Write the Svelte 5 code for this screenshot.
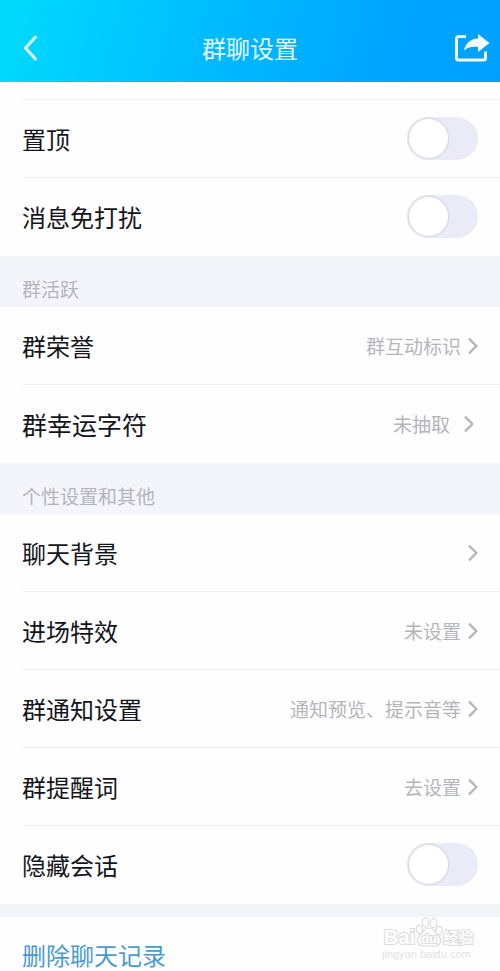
<script>
    let pinned = $state(false);
    let muted = $state(false);
    let hidden = $state(false);

    const activity = [
        { label: "群荣誉", value: "群互动标识" },
        { label: "群幸运字符", value: "未抽取", lucky: true }
    ];

    const personal = [
        { label: "聊天背景", value: "" },
        { label: "进场特效", value: "未设置" },
        { label: "群通知设置", value: "通知预览、提示音等" },
        { label: "群提醒词", value: "去设置" }
    ];
</script>

{#snippet linkRow(item)}
    <li class="row">
        <button class="link" class:lucky={item.lucky}>
            <span class="label">{item.label}</span>
            <span class="value">{item.value}</span>
            <svg class="chevron" width="10" height="20" viewBox="0 0 10 20" aria-hidden="true">
                <path d="M1 2.6 8.400 10 1 17.4" fill="none" stroke="#b4b6be" stroke-width="2.4" />
            </svg>
        </button>
    </li>
{/snippet}

<div class="page">
    <header>
        <button class="icon back" aria-label="返回">
            <svg width="16" height="28" viewBox="0 0 16 28">
                <path d="M13.500 3 3.500 14l10 11" fill="none" stroke="#e6fcff" stroke-width="3" stroke-linecap="round" stroke-linejoin="round" />
            </svg>
        </button>
        <h1>群聊设置</h1>
        <button class="icon" aria-label="分享">
            <svg width="36" height="30" viewBox="0 0 36 30">
                <path d="M12 3.500H4.500a2 2 0 0 0-2 2V25a2 2 0 0 0 2 2h25a2 2 0 0 0 2-2v-6.500" fill="none" stroke="#f4fdff" stroke-width="3" />
                <path d="M24 1 35.500 10 24 19v-5c-6-.6-9.500 0-14 3.600C11.500 10.500 16 6 24 5.500Z" fill="#f4fdff" />
            </svg>
        </button>
    </header>

    <main>
        <div class="strip"></div>
        <ul>
            <li class="row">
                <label>
                    <span class="label">置顶</span>
                    <input type="checkbox" bind:checked={pinned} />
                </label>
            </li>
            <li class="row">
                <label>
                    <span class="label">消息免打扰</span>
                    <input type="checkbox" bind:checked={muted} />
                </label>
            </li>
        </ul>

        <h2>群活跃</h2>
        <ul>
            {#each activity as item}
                {@render linkRow(item)}
            {/each}
        </ul>

        <h2>个性设置和其他</h2>
        <ul>
            {#each personal as item}
                {@render linkRow(item)}
            {/each}
            <li class="row">
                <label>
                    <span class="label">隐藏会话</span>
                    <input type="checkbox" bind:checked={hidden} />
                </label>
            </li>
        </ul>

        <div class="gap"></div>
        <button class="link delete">删除聊天记录</button>
    </main>

    <div class="watermark">
        <div class="brand">
            <span class="latin">Bai</span>
            <span class="paw">
                <svg width="28" height="30" viewBox="0 0 28 30" aria-hidden="true">
                    <g fill="#fff" stroke="#dcdcdc" stroke-width="1.2">
                        <ellipse cx="4.500" cy="12.500" rx="3.200" ry="4.200" transform="rotate(-15 4.500 12.500)" />
                        <ellipse cx="10.500" cy="5.500" rx="3.200" ry="4.600" />
                        <ellipse cx="18.500" cy="6" rx="3.200" ry="4.600" transform="rotate(12 18.500 6)" />
                        <ellipse cx="24" cy="13.500" rx="3.200" ry="4.200" transform="rotate(15 24 13.500)" />
                        <path d="M14 11c3.500 0 5 3 7.500 5.500s5 5 4 8.500c-1 3.600-4.500 4-11.500 4S3.500 28.600 2.500 25c-1-3.500 1.500-6 4-8.500S10.500 11 14 11Z" />
                    </g>
                </svg>
                <span class="du">du</span>
            </span>
            <span class="cjk">经验</span>
        </div>
        <div class="site">jingyan.baidu.com</div>
    </div>
</div>

<style>
    :global(body) {
        margin: 0;
        background: #fefefe;
    }

    .page {
        position: relative;
        height: 100vh;
        overflow: hidden;
        background: #fefefe;
        font-family: "Noto Sans CJK SC", "Liberation Sans", sans-serif;
        color: #14151c;
    }

    button {
        border: none;
        background: none;
        padding: 0;
        font: inherit;
        color: inherit;
        cursor: pointer;
    }

    header {
        display: flex;
        align-items: center;
        justify-content: space-between;
        height: 82px;
        box-sizing: border-box;
        padding: 14px 10px 0;
        background: linear-gradient(105deg, #00dcfc 0%, #00c6ff 28%, #00b6ff 50%, #00a6ff 75%, #00a0ff 100%);
    }

    .icon {
        display: flex;
        width: 36px;
    }

    .back {
        padding-left: 12px;
    }

    h1 {
        margin: 0;
        font-size: 24px;
        line-height: 36px;
        font-weight: 400;
        color: #e6faff;
    }

    .strip {
        height: 17px;
        margin-left: 22px;
        border-bottom: 1px solid #f1f2f4;
    }

    ul {
        list-style: none;
        margin: 0;
        padding: 0 0 0 22px;
    }

    .row {
        height: 78px;
        box-sizing: border-box;
        border-bottom: 1px solid #eeeff2;
    }

    .row:last-child {
        border-bottom-color: transparent;
    }

    .row label,
    .link {
        display: flex;
        align-items: center;
        width: 100%;
        height: 100%;
        box-sizing: border-box;
        padding-right: 22px;
        text-align: left;
    }

    .label {
        flex: 1;
        font-size: 24px;
        line-height: 36px;
    }

    .value {
        font-size: 19px;
        line-height: 28px;
        color: #b4b5bc;
        margin-right: 7px;
    }

    .link.lucky {
        padding-right: 26px;
    }

    .lucky .label {
        font-size: 25px;
    }

    .lucky .value {
        margin-right: 14px;
    }

    h2 {
        margin: 0;
        padding: 19px 22px 4px;
        font-size: 19px;
        line-height: 28px;
        font-weight: 400;
        color: #b3b4bc;
        background: #f4f5fa;
    }

    input {
        appearance: none;
        width: 71px;
        height: 43px;
        margin: 0;
        padding: 2px;
        box-sizing: border-box;
        border-radius: 22px;
        background: #eaebf6;
        cursor: pointer;
    }

    input::before {
        content: "";
        display: block;
        width: 39px;
        height: 39px;
        border-radius: 50%;
        background: #fff;
        box-shadow: 0 0 3px rgba(60, 60, 90, 0.25);
    }

    input:checked {
        background: #00b4ff;
    }

    input:checked::before {
        margin-left: auto;
    }

    .gap {
        height: 13px;
        background: #f4f5fa;
    }

    .delete {
        height: auto;
        padding: 24px 22px;
        font-size: 24px;
        line-height: 28px;
        color: #4a9bd0;
    }

    .watermark {
        position: absolute;
        right: 26px;
        bottom: 10px;
        width: 92px;
        color: #fff;
        font-family: "Liberation Sans", "Noto Sans CJK SC", sans-serif;
        -webkit-text-stroke: 2px #dcdcdc;
        paint-order: stroke fill;
        pointer-events: none;
    }

    .brand {
        display: flex;
        align-items: flex-end;
        height: 30px;
        padding-left: 2px;
    }

    .latin {
        font-size: 20px;
        line-height: 20px;
        font-weight: 700;
    }

    .paw {
        position: relative;
        display: flex;
    }

    .paw svg {
        paint-order: normal;
    }

    .du {
        position: absolute;
        left: 6px;
        bottom: 0;
        font-size: 13px;
        line-height: 16px;
        font-weight: 700;
    }

    .cjk {
        font-size: 15px;
        line-height: 18px;
        font-weight: 700;
    }

    .site {
        font-size: 11px;
        line-height: 14px;
        -webkit-text-stroke: 0;
        color: #e2e2e2;
    }
</style>
